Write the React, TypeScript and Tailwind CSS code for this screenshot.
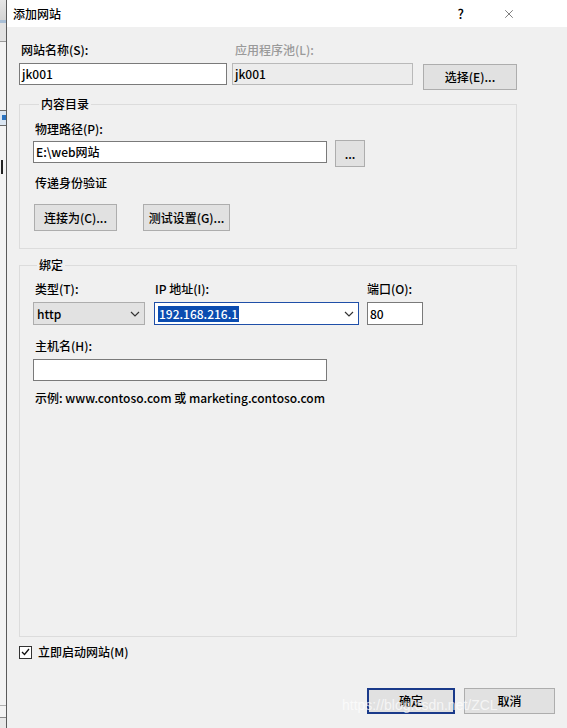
import { X } from "lucide-react";

const field = "h-[22px] border border-[#7a7a7a] bg-white px-[2px] text-[12px] leading-[20px] text-black";
const button =
  "flex items-center justify-center border border-[#adadad] bg-[#e1e1e1] text-[12px] leading-none text-black";

function Chevron() {
  return (
    <svg width="10" height="6" viewBox="0 0 10 6" className="shrink-0">
      <path d="M1 1l4 4 4-4" fill="none" stroke="#333" strokeWidth="1.2" />
    </svg>
  );
}

function LeftStrip() {
  return (
    <div className="flex w-[7px] shrink-0 flex-col overflow-hidden border-r border-[#5a5a5a] bg-[#f3f3f3]">
      <div className="h-[20px] bg-gradient-to-b from-[#e6e6e6] to-[#d4d4d4]" />
      <div className="h-[3px] bg-[#a9bfd6]" />
      <div className="h-[19px] border-b border-[#9a9a9a] bg-[#e2e2e2]" />
      <div className="h-[68px]" />
      <div className="h-[16px] border-y border-[#6a6a6a] bg-[#dbe6f2]">
        <div className="ml-[2px] mt-[4px] h-[5px] w-[4px] bg-[#2a73c0]" />
      </div>
      <div className="h-[34px]" />
      <div className="ml-[1px] h-[14px] w-[2px] bg-[#222]" />
      <div className="flex-1" />
      <div className="h-[12px] border-t border-[#b0b0b0]" />
      <div className="h-[11px] border-t border-[#8a8a8a] bg-[#e8e8e8]" />
    </div>
  );
}

export default function App() {
  return (
    <div className="flex h-[728px] w-[567px] overflow-hidden bg-[#f0f0f0] font-['Noto_Sans_CJK_SC','Noto_Sans',sans-serif] text-[12px] font-medium text-black">
      <LeftStrip />
      <div className="relative flex flex-1 flex-col">
        {/* title bar */}
        <div className="flex h-[27px] items-center bg-white pl-[6px]">
          <span className="leading-[16px]">添加网站</span>
          <span className="ml-auto mr-[38px] text-[13px] leading-[16px]">?</span>
          <X size={14} strokeWidth={1} className="mr-[51px] text-[#222]" />
        </div>

        <div className="flex flex-1 flex-col px-[12px] pt-[15px]">
          {/* site name / app pool */}
          <div className="flex items-start">
            <div className="flex w-[208px] flex-col">
              <label className="pl-[2px] leading-[16px]">网站名称(S):</label>
              <div className={`mt-[5px] ${field}`}>jk001</div>
            </div>
            <div className="ml-[5px] flex w-[181px] flex-col">
              <label className="pl-[3px] leading-[16px] text-[#9a9a9a]">应用程序池(L):</label>
              <div className="mt-[5px] h-[22px] border border-[#b9b9b9] bg-[#ececec] px-[2px] leading-[20px]">jk001</div>
            </div>
            <button className={`ml-[10px] mt-[22px] h-[26px] w-[94px] ${button}`}>选择(E)...</button>
          </div>

          {/* content directory */}
          <fieldset className="mt-[6px] w-[498px] border border-[#dcdcdc] px-[13px] pb-[17px] pt-[9px]">
            <legend className="ml-[6px] px-[2px] leading-[16px]">内容目录</legend>
            <label className="block pl-[2px] leading-[16px]">物理路径(P):</label>
            <div className="mt-[4px] flex items-start">
              <div className={`w-[294px] ${field}`}>E:\web网站</div>
              <button className={`-mt-[1px] ml-[8px] h-[27px] w-[30px] ${button}`}>...</button>
            </div>
            <div className="mt-[8px] pl-[2px] leading-[16px]">传递身份验证</div>
            <div className="mt-[13px] flex">
              <button className={`ml-[1px] h-[27px] w-[83px] ${button}`}>连接为(C)...</button>
              <button className={`ml-[26px] h-[27px] w-[87px] ${button}`}>测试设置(G)...</button>
            </div>
          </fieldset>

          {/* binding */}
          <fieldset className="mt-[8px] h-[380px] w-[498px] border border-[#dcdcdc] px-[13px] pt-[8px]">
            <legend className="ml-[4px] px-[2px] leading-[16px]">绑定</legend>
            <div className="flex items-start">
              <div className="flex w-[112px] flex-col">
                <label className="pl-[2px] leading-[16px]">类型(T):</label>
                <div className="mt-[5px] flex h-[23px] items-center justify-between border border-[#adadad] bg-[#e2e2e2] pl-[3px] pr-[4px]">
                  <span>http</span>
                  <Chevron />
                </div>
              </div>
              <div className="ml-[9px] flex w-[205px] flex-col">
                <label className="pl-[1px] leading-[16px]">IP 地址(I):</label>
                <div className="mt-[5px] flex h-[23px] items-center justify-between border border-[#1f4fa8] bg-white pl-[3px] pr-[4px]">
                  <span className="bg-[#0b4cb0] px-[1px] leading-[16px] text-white">192.168.216.1</span>
                  <Chevron />
                </div>
              </div>
              <div className="ml-[8px] flex w-[56px] flex-col">
                <label className="leading-[16px]">端口(O):</label>
                <div className={`mt-[5px] h-[23px] ${field} leading-[21px]`}>80</div>
              </div>
            </div>
            <label className="mt-[13px] block pl-[2px] leading-[16px]">主机名(H):</label>
            <div className={`mt-[5px] w-[294px] ${field}`} />
            <div className="mt-[9px] pl-[2px] leading-[16px]">示例: www.contoso.com 或 marketing.contoso.com</div>
          </fieldset>

          {/* start immediately */}
          <label className="mt-[7px] flex items-center">
            <span className="flex h-[13px] w-[13px] items-center justify-center border border-[#333] bg-white">
              <svg width="9" height="8" viewBox="0 0 9 8">
                <path d="M1 4l2.5 2.5L8 1" fill="none" stroke="#111" strokeWidth="1.3" />
              </svg>
            </span>
            <span className="ml-[6px] leading-[16px]">立即启动网站(M)</span>
          </label>

          {/* dialog buttons */}
          <div className="mt-[28px] flex justify-end">
            <button className="flex h-[26px] w-[88px] items-center justify-center border-2 border-[#1a3a8a] bg-[#e1e1e1] text-[12px]">
              确定
            </button>
            <button className={`ml-[9px] h-[26px] w-[91px] ${button}`}>取消</button>
          </div>
        </div>

        {/* watermark */}
        <div className="pointer-events-none absolute left-[335px] top-[697px] font-['Liberation_Sans',sans-serif] text-[14px] font-normal leading-[16px] text-white/70">
          https://blog.csdn.net/ZCL
        </div>
      </div>
    </div>
  );
}
